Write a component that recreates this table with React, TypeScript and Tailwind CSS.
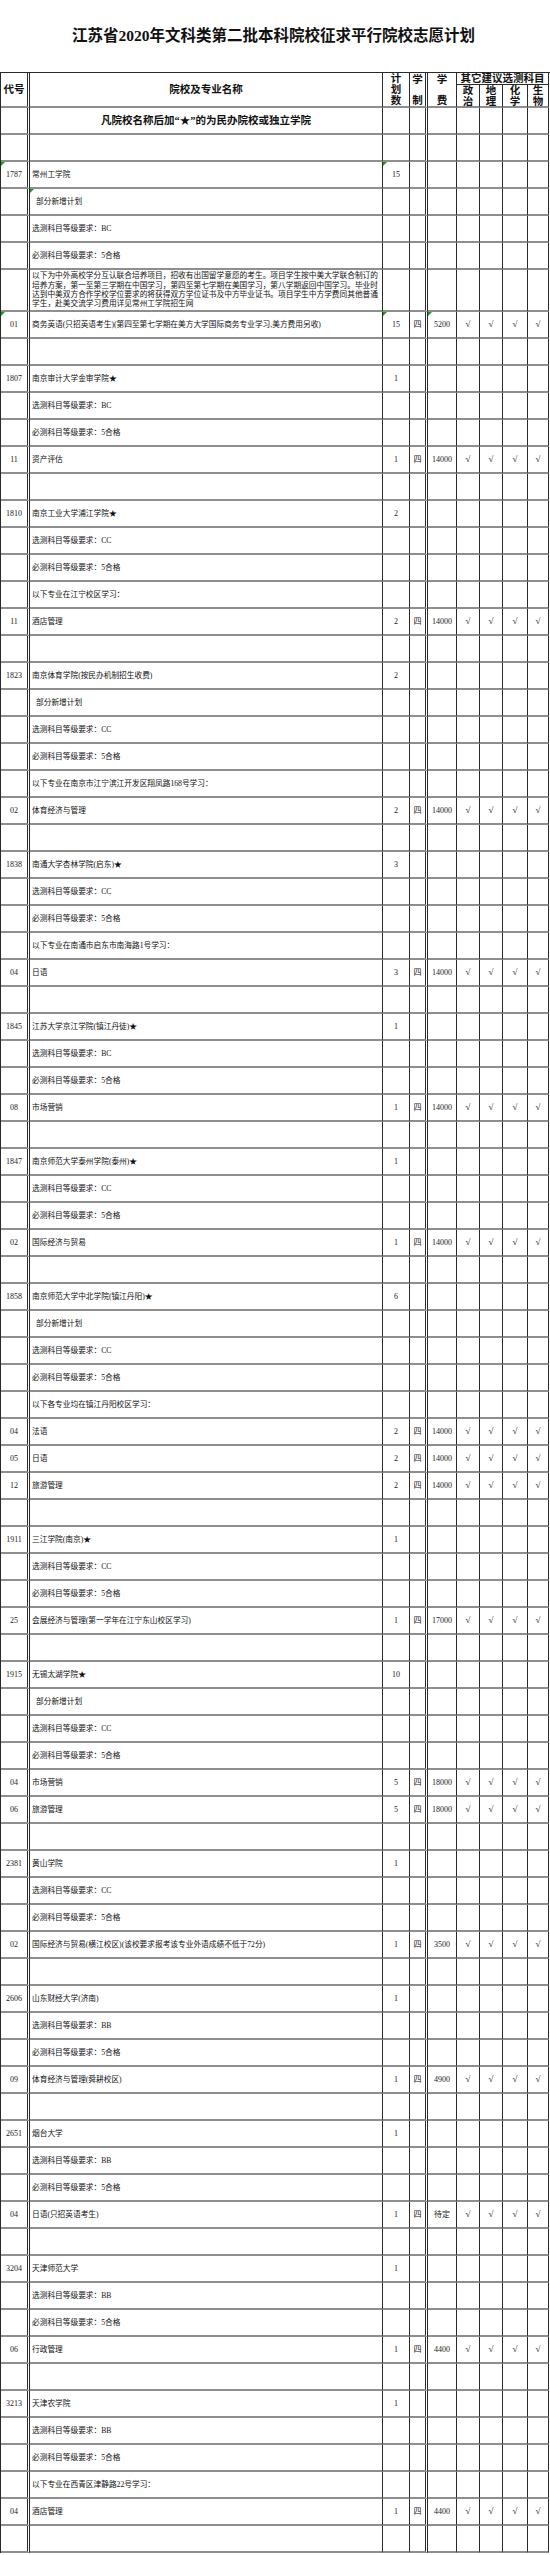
import React from "react";

type Row =
  | { t: "E" }
  | { t: "S"; code: string; name: string; plan: string; mk?: boolean }
  | { t: "I"; text: string; indent?: boolean; mk?: boolean }
  | { t: "L" }
  | { t: "M"; code: string; name: string; plan: string; fee: string; mk?: boolean };

const E: Row = { t: "E" };
const S = (code: string, name: string, plan: string, mk?: boolean): Row => ({ t: "S", code, name, plan, mk });
const I = (text: string, indent?: boolean, mk?: boolean): Row => ({ t: "I", text, indent, mk });
const M = (code: string, name: string, plan: string, fee: string, mk?: boolean): Row => ({ t: "M", code, name, plan, fee, mk });
const XC = (g: string) => I("选测科目等级要求：" + g);
const BC = I("必测科目等级要求：5合格");
const NEW = I("部分新增计划", true);

const rows: Row[] = [
  E,
  S("1787", "常州工学院", "15", true),
  I("部分新增计划", true, true),
  XC("BC"),
  BC,
  { t: "L" },
  M("01", "商务英语(只招英语考生)(第四至第七学期在美方大学国际商务专业学习,美方费用另收)", "15", "5200", true),
  E,
  S("1807", "南京审计大学金审学院★", "1"),
  XC("BC"),
  BC,
  M("11", "资产评估", "1", "14000"),
  E,
  S("1810", "南京工业大学浦江学院★", "2"),
  XC("CC"),
  BC,
  I("以下专业在江宁校区学习："),
  M("11", "酒店管理", "2", "14000"),
  E,
  S("1823", "南京体育学院(按民办机制招生收费)", "2"),
  NEW,
  XC("CC"),
  BC,
  I("以下专业在南京市江宁滨江开发区翔凤路168号学习："),
  M("02", "体育经济与管理", "2", "14000"),
  E,
  S("1838", "南通大学杏林学院(启东)★", "3"),
  XC("CC"),
  BC,
  I("以下专业在南通市启东市南海路1号学习："),
  M("04", "日语", "3", "14000"),
  E,
  S("1845", "江苏大学京江学院(镇江丹徒)★", "1"),
  XC("BC"),
  BC,
  M("08", "市场营销", "1", "14000"),
  E,
  S("1847", "南京师范大学泰州学院(泰州)★", "1"),
  XC("CC"),
  BC,
  M("02", "国际经济与贸易", "1", "14000"),
  E,
  S("1858", "南京师范大学中北学院(镇江丹阳)★", "6"),
  NEW,
  XC("CC"),
  BC,
  I("以下各专业均在镇江丹阳校区学习："),
  M("04", "法语", "2", "14000"),
  M("05", "日语", "2", "14000"),
  M("12", "旅游管理", "2", "14000"),
  E,
  S("1911", "三江学院(南京)★", "1"),
  XC("CC"),
  BC,
  M("25", "会展经济与管理(第一学年在江宁东山校区学习)", "1", "17000"),
  E,
  S("1915", "无锡太湖学院★", "10"),
  NEW,
  XC("CC"),
  BC,
  M("04", "市场营销", "5", "18000"),
  M("06", "旅游管理", "5", "18000"),
  E,
  S("2381", "黄山学院", "1"),
  XC("CC"),
  BC,
  M("02", "国际经济与贸易(横江校区)(该校要求报考该专业外语成绩不低于72分)", "1", "3500"),
  E,
  S("2606", "山东财经大学(济南)", "1"),
  XC("BB"),
  BC,
  M("09", "体育经济与管理(舜耕校区)", "1", "4900"),
  E,
  S("2651", "烟台大学", "1"),
  XC("BB"),
  BC,
  M("04", "日语(只招英语考生)", "1", "待定"),
  E,
  S("3204", "天津师范大学", "1"),
  XC("BB"),
  BC,
  M("06", "行政管理", "1", "4400"),
  E,
  S("3213", "天津农学院", "1"),
  XC("BB"),
  BC,
  I("以下专业在西青区津静路22号学习："),
  M("04", "酒店管理", "1", "4400"),
  E,
];

const LONG = [
  "以下为中外高校学分互认联合培养项目，招收有出国留学意愿的考生。项目学生按中美大学联合制订的",
  "培养方案，第一至第三学期在中国学习，第四至第七学期在美国学习，第八学期返回中国学习。毕业时",
  "达到中美双方合作学校学位要求的将获得双方学位证书及中方毕业证书。项目学生中方学费同其他普通",
  "学生，赴美交流学习费用详见常州工学院招生网",
];

const cell = "relative shrink-0 flex items-center border-r border-b-2 border-r-[#2a2a2a] border-b-[#8e8e8e]";
const dcell = "relative shrink-0 flex items-center border-r-[3px] border-double border-b-2 border-r-[#2a2a2a] border-b-[#8e8e8e]";

function Mark() {
  return (
    <span className="absolute left-0 top-0 w-0 h-0 border-t-[4px] border-r-[4px] border-t-[#1a9a1a] border-r-transparent" />
  );
}

function Check() {
  return <span className="text-[9px] leading-none text-[#222]">√</span>;
}

function DataRow({ r }: { r: Row }) {
  const isSM = r.t === "S" || r.t === "M";
  const code = isSM ? r.code : "";
  const plan = isSM ? r.plan : "";
  const isM = r.t === "M";
  const mk = r.t !== "E" && r.t !== "L" && !!(r as { mk?: boolean }).mk;
  const h = r.t === "L" ? "h-[42px]" : "h-[27px]";
  return (
    <div className={`flex ${h}`}>
      <div className={`${dcell} w-[29px] justify-center text-[8px] text-[#222]`}>
        {mk && isSM && <Mark />}
        {code}
      </div>
      <div className={`${cell} w-[353px] text-[7.7px] text-[#111] whitespace-nowrap`}>
        {mk && r.t === "I" && <Mark />}
        {isSM ? <span className="pl-[2px]">{r.name}</span> : null}
        {r.t === "I" ? <span className={r.indent ? "pl-[6px]" : "pl-[2px]"}>{r.text}</span> : null}
        {r.t === "L" ? (
          <div className="pl-[2px] leading-[9.3px]">
            {LONG.map((l) => (
              <div key={l}>{l}</div>
            ))}
          </div>
        ) : null}
      </div>
      <div className={`${cell} w-[27px] justify-center text-[8px] text-[#222]`}>
        {mk && isSM && <Mark />}
        {plan}
      </div>
      <div className={`${dcell} w-[18px] justify-center text-[8px] text-[#222]`}>{isM ? "四" : ""}</div>
      <div className={`${cell} w-[29px] justify-center text-[8px] text-[#222]`}>
        {mk && isM && <Mark />}
        {isM ? r.fee : ""}
      </div>
      <div className={`${cell} w-[23px] justify-center`}>{isM ? <Check /> : null}</div>
      <div className={`${cell} w-[23px] justify-center`}>{isM ? <Check /> : null}</div>
      <div className={`${cell} w-[25px] justify-center`}>{isM ? <Check /> : null}</div>
      <div className={`${cell} w-[21px] justify-center`}>{isM ? <Check /> : null}</div>
    </div>
  );
}

export default function App() {
  return (
    <div className="w-[550px] bg-white text-black [font-family:'Liberation_Serif','Noto_Sans_CJK_SC',serif]">
      <div className="h-[72px] flex items-center pl-[72px]">
        <h1 className="text-[15.5px] font-bold text-[#111] whitespace-nowrap">江苏省2020年文科类第二批本科院校征求平行院校志愿计划</h1>
      </div>
      <div className="w-[550px] border-l border-t border-l-[#2a2a2a] border-t-[#2a2a2a]">
        {/* header */}
        <div className="flex h-[35px] text-[10.5px] font-bold text-[#111]">
          <div className={`${dcell} w-[29px] justify-center`}>代号</div>
          <div className={`${cell} w-[353px] justify-center`}>院校及专业名称</div>
          <div className={`${cell} w-[27px] justify-center`}>
            <div className="flex flex-col items-center leading-[11px]">
              <span>计</span>
              <span>划</span>
              <span>数</span>
            </div>
          </div>
          <div className={`${dcell} w-[18px] justify-center`}>
            <div className="h-[32px] flex flex-col items-center justify-between leading-[11px]">
              <span>学</span>
              <span>制</span>
            </div>
          </div>
          <div className={`${cell} w-[29px] justify-center`}>
            <div className="h-[32px] flex flex-col items-center justify-between leading-[11px]">
              <span>学</span>
              <span>费</span>
            </div>
          </div>
          <div className="w-[92px] shrink-0 flex flex-col">
            <div className="h-[12px] border-r border-b border-r-[#2a2a2a] border-b-[#2a2a2a] flex items-center justify-center leading-[11px] whitespace-nowrap">
              其它建议选测科目
            </div>
            <div className="flex h-[23px]">
              {[
                ["政", "治", "w-[23px]"],
                ["地", "理", "w-[23px]"],
                ["化", "学", "w-[25px]"],
                ["生", "物", "w-[21px]"],
              ].map(([a, b, w]) => (
                <div key={a} className={`${cell} ${w} justify-center`}>
                  <div className="flex flex-col items-center leading-[11px]">
                    <span>{a}</span>
                    <span>{b}</span>
                  </div>
                </div>
              ))}
            </div>
          </div>
        </div>
        {/* note row */}
        <div className="flex h-[27px]">
          <div className={`${dcell} w-[29px]`}></div>
          <div className={`${cell} w-[353px] justify-center text-[10.5px] font-bold text-[#111]`}>
            凡院校名称后加“★”的为民办院校或独立学院
          </div>
          <div className={`${cell} w-[27px]`}></div>
          <div className={`${dcell} w-[18px]`}></div>
          <div className={`${cell} w-[29px]`}></div>
          <div className={`${cell} w-[23px]`}></div>
          <div className={`${cell} w-[23px]`}></div>
          <div className={`${cell} w-[25px]`}></div>
          <div className={`${cell} w-[21px]`}></div>
        </div>
        {rows.map((r, i) => (
          <DataRow key={i} r={r} />
        ))}
      </div>
    </div>
  );
}
